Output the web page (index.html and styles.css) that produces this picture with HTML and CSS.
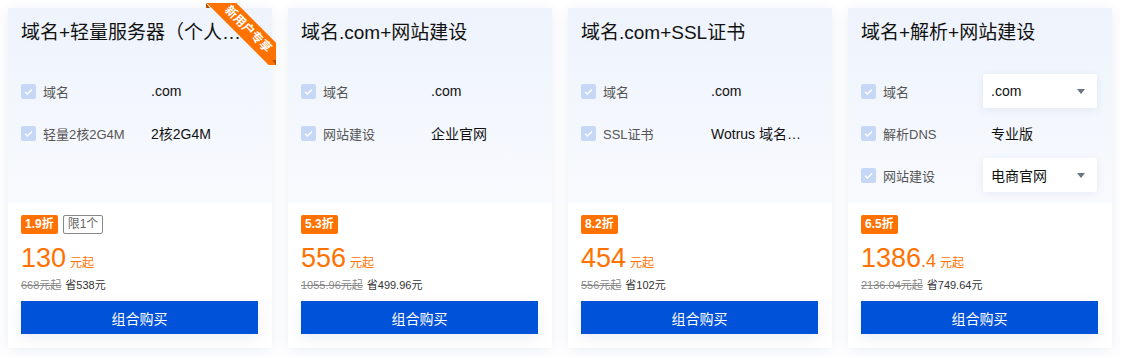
FILE: index.html
```html
<!DOCTYPE html>
<html lang="zh-CN">
<head>
    <meta charset="UTF-8">
    <meta name="viewport" content="width=device-width, initial-scale=1.0">
    <title>组合套餐</title>
    <link rel="stylesheet" href="styles.css">
</head>
<body>
    <div class="packages">
        <!-- Package 1 -->
        <div class="card">
            <div class="ribbon"><span>新用户专享</span></div>
            <div class="card-top">
                <h3 class="card-title">域名+轻量服务器（个人版）</h3>
                <ul class="spec-list">
                    <li class="spec">
                        <span class="spec-name"><i class="check"><svg viewBox="0 0 15 15"><path d="M4 7.8l2.4 2.3L11 5.4"/></svg></i>域名</span>
                        <span class="spec-value">.com</span>
                    </li>
                    <li class="spec">
                        <span class="spec-name"><i class="check"><svg viewBox="0 0 15 15"><path d="M4 7.8l2.4 2.3L11 5.4"/></svg></i>轻量2核2G4M</span>
                        <span class="spec-value">2核2G4M</span>
                    </li>
                </ul>
            </div>
            <div class="card-bottom">
                <div class="tags"><span class="tag-discount">1.9折</span><span class="tag-limit">限1个</span></div>
                <div class="price"><span class="price-num">130</span><span class="price-unit">元起</span></div>
                <div class="price-origin"><s>668元起</s><span class="save">省538元</span></div>
                <button class="buy-btn">组合购买</button>
            </div>
        </div>

        <!-- Package 2 -->
        <div class="card">
            <div class="card-top">
                <h3 class="card-title">域名.com+网站建设</h3>
                <ul class="spec-list">
                    <li class="spec">
                        <span class="spec-name"><i class="check"><svg viewBox="0 0 15 15"><path d="M4 7.8l2.4 2.3L11 5.4"/></svg></i>域名</span>
                        <span class="spec-value">.com</span>
                    </li>
                    <li class="spec">
                        <span class="spec-name"><i class="check"><svg viewBox="0 0 15 15"><path d="M4 7.8l2.4 2.3L11 5.4"/></svg></i>网站建设</span>
                        <span class="spec-value">企业官网</span>
                    </li>
                </ul>
            </div>
            <div class="card-bottom">
                <div class="tags"><span class="tag-discount">5.3折</span></div>
                <div class="price"><span class="price-num">556</span><span class="price-unit">元起</span></div>
                <div class="price-origin"><s>1055.96元起</s><span class="save">省499.96元</span></div>
                <button class="buy-btn">组合购买</button>
            </div>
        </div>

        <!-- Package 3 -->
        <div class="card">
            <div class="card-top">
                <h3 class="card-title">域名.com+SSL证书</h3>
                <ul class="spec-list">
                    <li class="spec">
                        <span class="spec-name"><i class="check"><svg viewBox="0 0 15 15"><path d="M4 7.8l2.4 2.3L11 5.4"/></svg></i>域名</span>
                        <span class="spec-value">.com</span>
                    </li>
                    <li class="spec">
                        <span class="spec-name"><i class="check"><svg viewBox="0 0 15 15"><path d="M4 7.8l2.4 2.3L11 5.4"/></svg></i>SSL证书</span>
                        <span class="spec-value">Wotrus 域名型 DV SSL证书</span>
                    </li>
                </ul>
            </div>
            <div class="card-bottom">
                <div class="tags"><span class="tag-discount">8.2折</span></div>
                <div class="price"><span class="price-num">454</span><span class="price-unit">元起</span></div>
                <div class="price-origin"><s>556元起</s><span class="save">省102元</span></div>
                <button class="buy-btn">组合购买</button>
            </div>
        </div>

        <!-- Package 4 -->
        <div class="card">
            <div class="card-top">
                <h3 class="card-title">域名+解析+网站建设</h3>
                <ul class="spec-list">
                    <li class="spec">
                        <span class="spec-name"><i class="check"><svg viewBox="0 0 15 15"><path d="M4 7.8l2.4 2.3L11 5.4"/></svg></i>域名</span>
                        <div class="select">.com<svg class="caret" viewBox="0 0 8 5"><path d="M0 0h8L4 5z"/></svg></div>
                    </li>
                    <li class="spec">
                        <span class="spec-name"><i class="check"><svg viewBox="0 0 15 15"><path d="M4 7.8l2.4 2.3L11 5.4"/></svg></i>解析DNS</span>
                        <span class="spec-value">专业版</span>
                    </li>
                    <li class="spec">
                        <span class="spec-name"><i class="check"><svg viewBox="0 0 15 15"><path d="M4 7.8l2.4 2.3L11 5.4"/></svg></i>网站建设</span>
                        <div class="select">电商官网<svg class="caret" viewBox="0 0 8 5"><path d="M0 0h8L4 5z"/></svg></div>
                    </li>
                </ul>
            </div>
            <div class="card-bottom">
                <div class="tags"><span class="tag-discount">6.5折</span></div>
                <div class="price"><span class="price-num">1386</span><span class="price-dec">.4</span><span class="price-unit">元起</span></div>
                <div class="price-origin"><s>2136.04元起</s><span class="save">省749.64元</span></div>
                <button class="buy-btn">组合购买</button>
            </div>
        </div>
    </div>
</body>
</html>
```

FILE: styles.css
```css
/* Page */
body {
    margin: 0;
    background: #fff;
    font-family: "Liberation Sans", "Noto Sans CJK SC", sans-serif;
    color: #000;
}

.packages {
    display: flex;
    gap: 16px;
    padding: 8px 10px 10px 8px;
}

/* Card */
.card {
    position: relative;
    width: 264px;
    background: #fff;
    box-shadow: 0 2px 12px rgba(40, 70, 130, 0.09);
}

.card-top {
    height: 195px;
    padding: 11px 13px 0 13px;
    box-sizing: border-box;
    background: linear-gradient(180deg, #eef3fc 0%, #f8fafe 100%);
}

.card-title {
    margin: 0;
    font-size: 19px;
    font-weight: normal;
    line-height: 28px;
    color: #111;
    white-space: nowrap;
    overflow: hidden;
    text-overflow: ellipsis;
}

/* Corner ribbon */
.ribbon {
    position: absolute;
    top: -5px;
    right: -4px;
    width: 70px;
    height: 62px;
    overflow: hidden;
    z-index: 2;
}

.ribbon span {
    position: absolute;
    left: -8px;
    top: 16px;
    width: 100px;
    height: 21px;
    line-height: 21px;
    background: #ff7200;
    color: #fff;
    font-size: 12px;
    font-weight: bold;
    text-align: center;
    transform: rotate(45deg);
}

/* folded ends of the ribbon */
.ribbon::before,
.ribbon::after {
    content: "";
    position: absolute;
    width: 0;
    height: 0;
    z-index: 1;
}

.ribbon::before {
    left: 0;
    top: 0;
    border-top: 5px solid transparent;
    border-left: 4px solid #b85200;
}

.ribbon::after {
    right: 0;
    bottom: 0;
    border-bottom: 5px solid transparent;
    border-right: 4px solid #b85200;
}

/* Spec rows */
.spec-list {
    list-style: none;
    margin: 23px 0 0 0;
    padding: 0;
}

.spec {
    display: flex;
    align-items: center;
    height: 42px;
}

.spec-name {
    display: flex;
    align-items: center;
    width: 122px;
    flex-shrink: 0;
    font-size: 13px;
    color: #555;
}

.check {
    display: inline-block;
    width: 15px;
    height: 15px;
    margin-right: 7px;
    border-radius: 2px;
    background: #c6d8f6;
}

.check svg {
    display: block;
    width: 15px;
    height: 15px;
    fill: none;
    stroke: #fff;
    stroke-width: 1.4;
}

.spec-value {
    width: 98px;
    padding-left: 8px;
    font-size: 14px;
    color: #111;
    white-space: nowrap;
    overflow: hidden;
    text-overflow: ellipsis;
}

.select {
    display: flex;
    align-items: center;
    justify-content: space-between;
    width: 114px;
    height: 34px;
    padding: 0 12px 0 8px;
    box-sizing: border-box;
    background: #fff;
    border-radius: 2px;
    box-shadow: 0 2px 8px rgba(40, 70, 130, 0.08);
    font-size: 14px;
    color: #111;
}

.caret {
    width: 8px;
    height: 5px;
    fill: #6b7280;
}

/* Price area */
.card-bottom {
    padding: 12px 14px 14px 13px;
}

.tags {
    display: flex;
    gap: 5px;
    height: 19px;
}

.tag-discount {
    padding: 0 4px;
    line-height: 19px;
    background: #ff7200;
    color: #fff;
    font-size: 12px;
    font-weight: bold;
    border-radius: 2px;
}

.tag-limit {
    padding: 0 4px;
    line-height: 17px;
    border: 1px solid #888;
    border-radius: 2px;
    color: #666;
    font-size: 12px;
}

.price {
    margin-top: 8px;
    height: 32px;
    line-height: 32px;
    color: #ff7200;
}

.price-num {
    font-size: 27px;
}

.price-dec {
    font-size: 18px;
}

.price-unit {
    margin-left: 4px;
    font-size: 12px;
}

.price-origin {
    margin-top: 2px;
    line-height: 18px;
    font-size: 11px;
}

.price-origin s {
    color: #888;
}

.save {
    margin-left: 4px;
    color: #333;
}

.buy-btn {
    display: block;
    width: 237px;
    height: 33px;
    margin-top: 7px;
    border: none;
    background: #0052d9;
    color: #fff;
    font-family: inherit;
    font-size: 14px;
    cursor: pointer;
    box-shadow: 0 4px 14px rgba(0, 40, 120, 0.08);
}
```
